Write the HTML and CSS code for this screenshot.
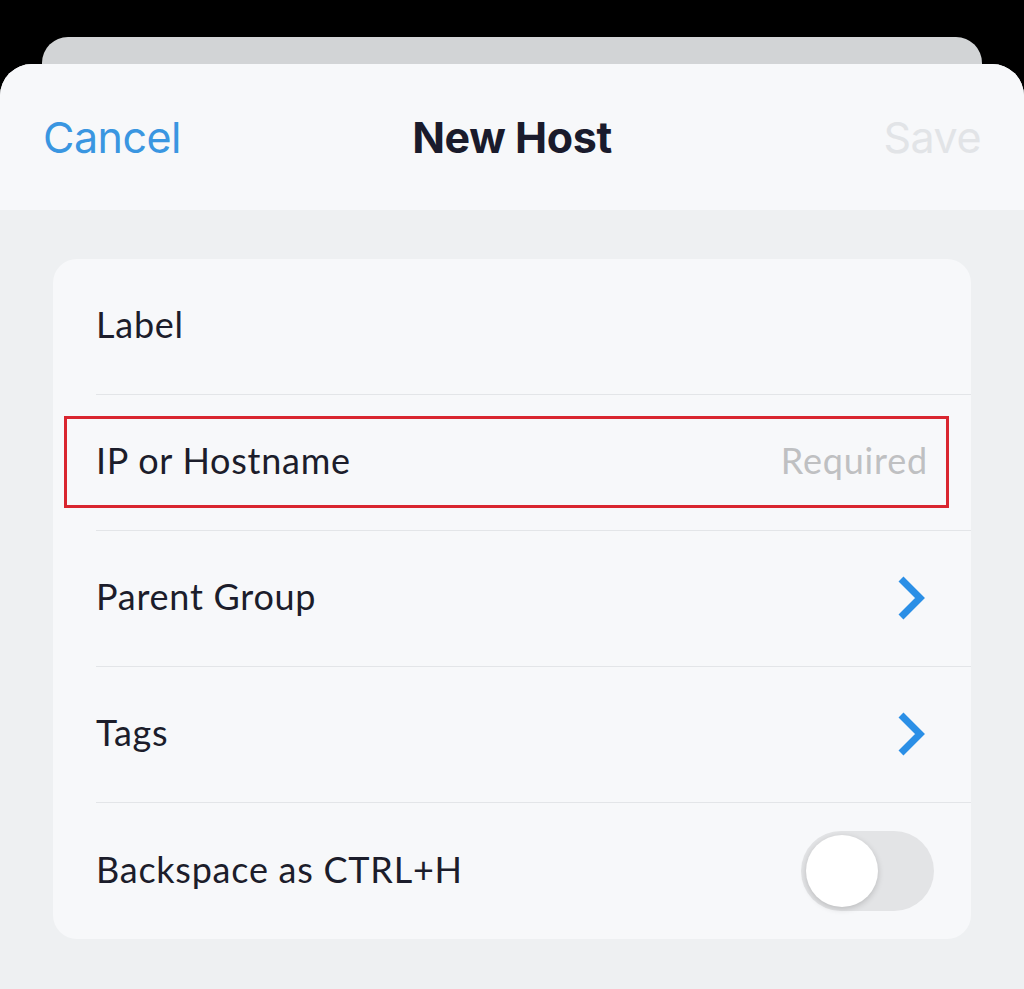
FILE: index.html
```html
<!DOCTYPE html>
<html lang="en">
<head>
    <meta charset="UTF-8">
    <meta name="viewport" content="width=device-width, initial-scale=1.0">
    <title>New Host</title>
    <link rel="stylesheet" href="styles.css">
</head>
<body>
    <div class="screen">
        <div class="backSheet"></div>
        <div class="sheet">
            <div class="navBar">
                <span class="navButton cancel">Cancel</span>
                <span class="navTitle">New Host</span>
                <span class="navButton save">Save</span>
            </div>
            <div class="content">
                <div class="card">
                    <div class="row">
                        <span class="rowLabel">Label</span>
                    </div>
                    <div class="row highlighted">
                        <span class="rowLabel">IP or Hostname</span>
                        <span class="placeholder">Required</span>
                    </div>
                    <div class="row">
                        <span class="rowLabel">Parent Group</span>
                        <svg class="chevron" width="32" height="46" viewBox="0 0 32 46">
                            <path d="M5 4 L24 23 L5 42" fill="none" stroke="#2b8fe6" stroke-width="7"/>
                        </svg>
                    </div>
                    <div class="row">
                        <span class="rowLabel">Tags</span>
                        <svg class="chevron" width="32" height="46" viewBox="0 0 32 46">
                            <path d="M5 4 L24 23 L5 42" fill="none" stroke="#2b8fe6" stroke-width="7"/>
                        </svg>
                    </div>
                    <div class="row">
                        <span class="rowLabel">Backspace as CTRL+H</span>
                        <div class="toggle"><div class="knob"></div></div>
                    </div>
                </div>
            </div>
        </div>
    </div>
</body>
</html>
```

FILE: styles.css
```css
body {
    margin: 0;
    background-color: #000;
    font-family: Inter, "Noto Sans", sans-serif;
}

.screen {
    height: 989px;
    overflow: hidden;
    padding-top: 37px;
    box-sizing: border-box;
}

.backSheet {
    margin: 0 42px;
    height: 27px;
    background-color: #d2d4d6;
    border-radius: 26px 26px 0 0;
}

.sheet {
    background-color: #eef0f2;
    border-radius: 32px 32px 0 0;
    height: 925px;
    overflow: hidden;
}

.navBar {
    height: 146px;
    background-color: #f7f8fa;
    display: flex;
    align-items: center;
    justify-content: space-between;
    padding: 0 43px;
    position: relative;
    box-sizing: border-box;
}

.navButton {
    font-size: 43px;
    letter-spacing: -0.5px;
}

.cancel {
    color: #3a96e1;
}

.save {
    color: #e2e4e7;
}

.navTitle {
    position: absolute;
    left: 0;
    right: 0;
    text-align: center;
    font-size: 43px;
    font-weight: 700;
    color: #1a1b2c;
    letter-spacing: -0.4px;
    pointer-events: none;
}

.content {
    padding: 49px 53px 0 53px;
}

.card {
    background-color: #f7f8fa;
    border-radius: 24px;
    padding-left: 43px;
}

.row {
    height: 136px;
    box-sizing: border-box;
    display: flex;
    align-items: center;
    justify-content: space-between;
    padding-right: 43px;
    padding-bottom: 5px;
    border-bottom: 1px solid #e3e5e8;
    position: relative;
    font-family: Lato, "Noto Sans", sans-serif;
}

.row:last-child {
    border-bottom: none;
}

.rowLabel {
    font-size: 36px;
    letter-spacing: 0.75px;
    color: #1c1d2b;
}

.placeholder {
    font-size: 36px;
    letter-spacing: 0.8px;
    color: #bfc0c2;
}

.highlighted::before {
    content: "";
    position: absolute;
    left: -32px;
    right: 22px;
    top: 21px;
    bottom: 22px;
    border: 3px solid #d9252f;
}

.chevron {
    display: block;
    margin-right: 0;
    margin-top: 4px;
}

.toggle {
    width: 133px;
    height: 80px;
    border-radius: 40px;
    background-color: #e3e4e6;
    position: relative;
    margin-right: -6px;
    margin-top: 5px;
}

.knob {
    position: absolute;
    left: 5px;
    top: 4px;
    width: 72px;
    height: 72px;
    border-radius: 50%;
    background-color: #fff;
    box-shadow: 0 2px 6px rgba(0, 0, 0, 0.18);
}
```
